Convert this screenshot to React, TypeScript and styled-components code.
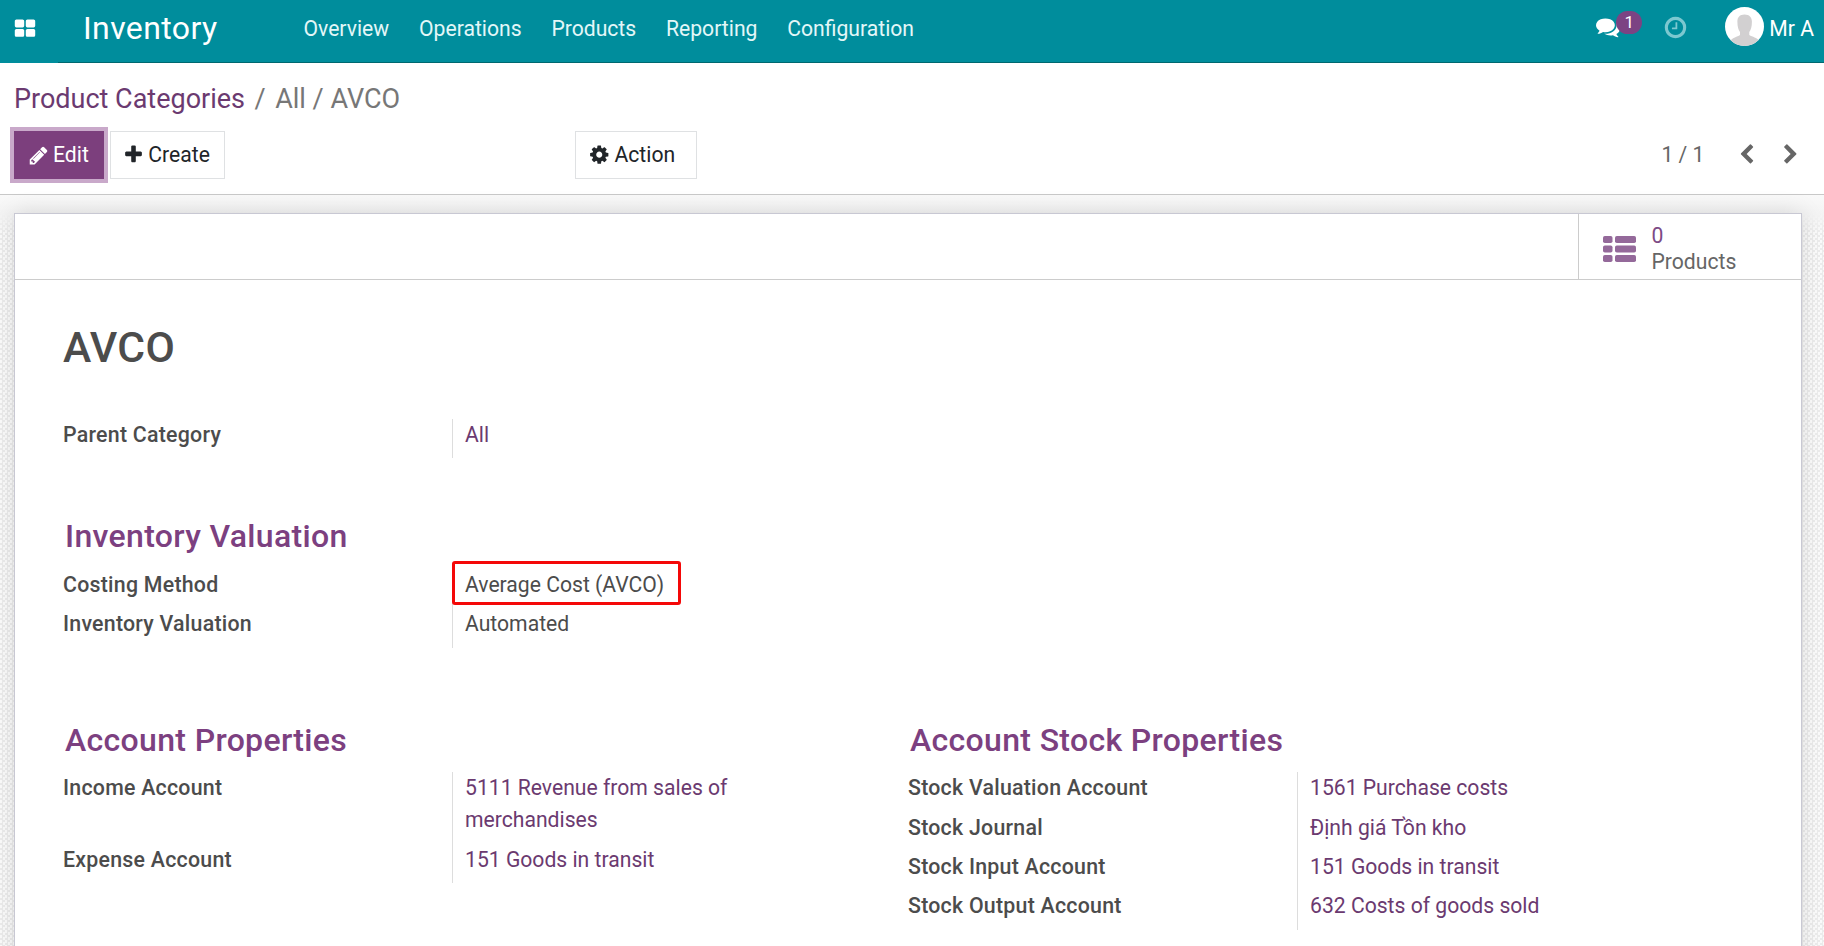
import React from "react";
import styled, { createGlobalStyle } from "styled-components";

const Global = createGlobalStyle`
  *, *::before, *::after { box-sizing: border-box; }
  html, body { margin: 0; padding: 0; height: 100%; overflow: hidden; }
  body {
    font-family: Roboto, "Noto Sans", sans-serif;
    font-size: 21.15px;
    line-height: 32px;
    color: #4c4c4c;
    background: #fff;
  }
`;

const Page = styled.div`
  height: 946px;
  display: flex;
  flex-direction: column;
  overflow: hidden;
`;

const Navbar = styled.header`
  height: 63px;
  flex: none;
  display: flex;
  align-items: center;
  padding: 0 10px 5px 14px;
  background: linear-gradient(#00686f, #00686f) 58px 62px no-repeat #008d9c;
  color: #fff;
`;

const Brand = styled.div`
  width: 220.5px;
  margin-left: 47px;
  font-size: 32px;
  line-height: 56px;
  padding-bottom: 2px;
  letter-spacing: 0.4px;
`;

const Menu = styled.nav`
  display: flex;
  gap: 29.8px;
  flex: 1;
`;

const MenuItem = styled.a`
  color: #e3f7f8;
  white-space: nowrap;
`;

const Systray = styled.div`
  display: flex;
  align-items: center;
`;

const Messages = styled.div`
  position: relative;
  width: 46px;
  height: 28px;
  margin-right: 21px;
`;

const Badge = styled.span`
  position: absolute;
  left: 20px;
  top: -4px;
  width: 26px;
  height: 23px;
  border-radius: 12px;
  background: #7c4383;
  font-size: 17px;
  line-height: 23px;
  text-align: center;
`;

const Clock = styled.span`
  display: flex;
  margin-bottom: 3px;
`;

const Avatar = styled.svg`
  margin: 0 5px 5px 37px;
`;

const ControlPanel = styled.section`
  height: 132px;
  flex: none;
  padding: 16px 24px 0 14px;
  border-bottom: 1px solid #c8c8c8;
`;

const Breadcrumb = styled.div`
  display: flex;
  gap: 9.5px;
  height: 40px;
  font-size: 27px;
  line-height: 40px;
  color: #777;
`;

const Crumb = styled.a`
  color: #6b3a70;
`;

const Toolbar = styled.div`
  display: flex;
  align-items: center;
  margin-top: 12px;
  height: 48px;
`;

const Button = styled.button<{ $primary?: boolean; $wide?: boolean }>`
  display: flex;
  align-items: center;
  gap: ${(p) => (p.$primary ? 5 : 6)}px;
  height: 48px;
  padding: 0 ${(p) => (p.$wide ? 21 : 14)}px 0 14px;
  font: inherit;
  border: 1px solid ${(p) => (p.$primary ? "#7c3f7d" : "#dfe1e3")};
  background: ${(p) => (p.$primary ? "#7c3f7d" : "#fff")};
  color: ${(p) => (p.$primary ? "#fff" : "#212529")};
  box-shadow: ${(p) => (p.$primary ? "0 0 0 4px #c9a9ca" : "none")};
`;

const MainButtons = styled.div`
  display: flex;
  gap: 6.5px;
  width: 561px;
`;

const Pager = styled.div`
  display: flex;
  align-items: center;
  margin-left: auto;
  color: #666;
`;

const PagerText = styled.span`
  margin-right: 32px;
`;

const PagerIcons = styled.span`
  display: flex;
  gap: 22px;
  margin-right: -1px;
`;

const Content = styled.main`
  flex: 1;
  min-height: 0;
  padding: 18px 22px 0 14px;
  background:
    linear-gradient(#f9f9f9, #f4f4f4 18px, rgba(244, 244, 244, 0) 40px),
    repeating-conic-gradient(#ececec 0 25%, #fbfbfb 0 50%) 0 0 / 5px 5px;
`;

const Sheet = styled.article`
  height: 780px;
  border: 1px solid #c8c8d3;
  background: #fff;
  box-shadow: 0 0 22px rgba(0, 0, 0, 0.13);
`;

const StatBar = styled.div`
  display: flex;
  justify-content: flex-end;
  height: 66px;
  border-bottom: 1px solid #ccc;
`;

const StatButton = styled.div`
  display: flex;
  align-items: center;
  width: 223px;
  padding: 5px 0 0 24px;
  gap: 15.5px;
  border-left: 1px solid #ccc;
  color: #666;
  line-height: 26px;
`;

const StatValue = styled.div`
  color: #7c4a85;
`;

const Body = styled.div`
  padding: 0 48px;
`;

const Title = styled.h1`
  margin: 35px 0 0;
  height: 65px;
  font-size: 42.6px;
  line-height: 64px;
  font-weight: 500;
  letter-spacing: 0.3px;
`;

const Columns = styled.div<{ $top: number }>`
  display: grid;
  grid-template-columns: 845px 1fr;
  margin-top: ${(p) => p.$top}px;
`;

const Heading = styled.h2`
  margin: 0 0 12.7px 2px;
  height: 40px;
  font-size: 32px;
  line-height: 40px;
  font-weight: 500;
  letter-spacing: 0.33px;
  color: #7c4080;
`;

const Field = styled.div`
  display: grid;
  grid-template-columns: 389px 280px;
`;

const Label = styled.div`
  font-size: 21.33px;
  font-weight: 500;
  letter-spacing: 0.25px;
`;

const Value = styled.div<{ $link?: boolean }>`
  position: relative;
  min-height: 39.33px;
  padding: 0 0 7.33px 12px;
  border-left: 1px solid #ddd;
  color: ${(p) => (p.$link ? "#6b3a70" : "#4c4c4c")};
`;

const Highlight = styled.span`
  position: absolute;
  left: -1px;
  top: -8px;
  width: 229px;
  height: 44px;
  border: 3px solid #f40808;
  border-radius: 3px;
`;

const paths = {
  apps: "M832 1024v384q0 52-38 90t-90 38h-512q-52 0-90-38t-38-90v-384q0-52 38-90t90-38h512q52 0 90 38t38 90zm0-768v384q0 52-38 90t-90 38h-512q-52 0-90-38t-38-90v-384q0-52 38-90t90-38h512q52 0 90 38t38 90zm896 768v384q0 52-38 90t-90 38h-512q-52 0-90-38t-38-90v-384q0-52 38-90t90-38h512q52 0 90 38t38 90zm0-768v384q0 52-38 90t-90 38h-512q-52 0-90-38t-38-90v-384q0-52 38-90t90-38h512q52 0 90 38t38 90z",
  plus: "M1600 736v192q0 40-28 68t-68 28h-416v416q0 40-28 68t-68 28h-192q-40 0-68-28t-28-68v-416h-416q-40 0-68-28t-28-68v-192q0-40 28-68t68-28h416v-416q0-40 28-68t68-28h192q40 0 68 28t28 68v416h416q40 0 68 28t28 68z",
  pencil: "M491 1536l91-91-235-235-91 91v107h128v128h107zm523-928q0-22-22-22-10 0-17 7l-542 542q-7 7-7 17 0 22 22 22 10 0 17-7l542-542q7-7 7-17zm-54-192l416 416-832 832h-416v-416zm683 96q0 53-37 90l-166 166-416-416 166-165q36-38 90-38 53 0 91 38l235 234q37 39 37 91z",
  cog: "M1152 896q0-106-75-181t-181-75-181 75-75 181 75 181 181 75 181-75 75-181zm512-109v222q0 12-8 23t-20 13l-185 28q-19 54-39 91 35 50 107 138 10 12 10 25t-9 23q-27 37-99 108t-94 71q-12 0-26-9l-138-108q-44 23-91 38-16 136-29 186-7 28-36 28h-222q-14 0-24.5-8.5t-11.5-21.5l-28-184q-49-16-90-37l-141 107q-10 9-25 9-14 0-25-11-126-114-165-168-7-10-7-23 0-12 8-23 15-21 51-66.5t54-70.5q-27-50-41-99l-183-27q-13-2-21-12.5t-8-23.5v-222q0-12 8-23t19-13l186-28q14-46 39-92-40-57-107-138-10-12-10-24 0-10 9-23 26-36 98.5-107.5t94.5-71.5q13 0 26 10l138 107q44-23 91-38 16-136 29-186 7-28 36-28h222q14 0 24.5 8.5t11.5 21.5l28 184q49 16 90 37l142-107q9-9 24-9 13 0 25 10 129 119 165 170 7 8 7 22 0 12-8 23-15 21-51 66.5t-54 70.5q26 50 41 98l183 28q13 2 21 12.5t8 23.5z",
  clock: "M1024 544v448q0 14-9 23t-23 9h-320q-14 0-23-9t-9-23v-64q0-14 9-23t23-9h224v-352q0-14 9-23t23-9h64q14 0 23 9t9 23zm416 352q0-148-73-273t-198-198-273-73-273 73-198 198-73 273 73 273 198 198 273 73 273-73 198-198 73-273zm224 0q0 209-103 385.5t-279.5 279.5-385.5 103-385.5-103-279.5-279.5-103-385.5 103-385.5 279.5-279.5 385.5-103 385.5 103 279.5 279.5 103 385.5z",
  comments: "M1408 768q0 139-94 257t-256.5 186.5-353.5 68.5q-86 0-176-16-124 88-278 128-36 9-86 16h-3q-11 0-20.5-8t-11.5-21q-1-3-1-6.5t.5-6.5 2-6l2.5-5 3.5-5.5 4-5 4.5-5 4-4.5q5-6 23-25t26-29.5 22.5-29 25-38.5 20.5-44q-124-72-195-177t-71-224q0-139 94-257t256.5-186.5 353.5-68.5 353.5 68.5 256.5 186.5 94 257zm384 256q0 120-71 224.5t-195 176.5q10 24 20.5 44t25 38.5 22.5 29 26 29.5 23 25q1 1 4 4.5t4.5 5 4 5 3.5 5.5l2.5 5 2 6 .5 6.5-1 6.5q-3 14-13 22t-22 7q-50-7-86-16-154-40-278-128-90 16-176 16-271 0-472-132 58 4 88 4 161 0 309-45t264-129q125-92 192-212t67-254q0-77-23-152 129 71 204 178t75 230z",
  left: "M1427 301l-531 531 531 531q19 19 19 45t-19 45l-166 166q-19 19-45 19t-45-19l-742-742q-19-19-19-45t19-45l742-742q19-19 45-19t45 19l166 166q19 19 19 45t-19 45z",
  right: "M365 301l531 531-531 531q-19 19-19 45t19 45l166 166q19 19 45 19t45-19l742-742q19-19 19-45t-19-45l-742-742q-19-19-45-19t-45 19l-166 166q-19 19-19 45t19 45z",
};

type IconProps = { name: keyof typeof paths; size?: number; crop?: string; width?: number; color?: string };

const Icon = ({ name, size = 21.33, width, crop = "0 0 1792 1792", color = "currentColor" }: IconProps) => (
  <svg width={width ?? size} height={size} viewBox={crop} fill={color} aria-hidden="true">
    <path d={paths[name]} />
  </svg>
);

const ListIcon = () => (
  <svg width="33" height="26" viewBox="0 0 33 26" fill="#94699a" aria-hidden="true">
    {[0, 9.5, 19].map((y) => (
      <React.Fragment key={y}>
        <rect x="0" y={y} width="9.5" height="7" rx="1.8" />
        <rect x="12" y={y} width="21" height="7" rx="1.8" />
      </React.Fragment>
    ))}
  </svg>
);

const menu = ["Overview", "Operations", "Products", "Reporting", "Configuration"];

const stockFields = [
  ["Stock Valuation Account", "1561 Purchase costs"],
  ["Stock Journal", "Định giá Tồn kho"],
  ["Stock Input Account", "151 Goods in transit"],
  ["Stock Output Account", "632 Costs of goods sold"],
];

const accountFields = [
  ["Income Account", "5111 Revenue from sales of merchandises"],
  ["Expense Account", "151 Goods in transit"],
];

const LinkFields = ({ items }: { items: string[][] }) => (
  <>
    {items.map(([label, value]) => (
      <Field key={label}>
        <Label>{label}</Label>
        <Value $link>{value}</Value>
      </Field>
    ))}
  </>
);

export default function App() {
  return (
    <>
      <Global />
      <Page>
        <Navbar>
          <Icon name="apps" size={22} />
          <Brand>Inventory</Brand>
          <Menu>
            {menu.map((m) => (
              <MenuItem key={m}>{m}</MenuItem>
            ))}
          </Menu>
          <Systray>
            <Messages>
              <Icon name="comments" size={24} />
              <Badge>1</Badge>
            </Messages>
            <Clock>
              <Icon name="clock" size={25} color="#7cc8d0" />
            </Clock>
            <Avatar width="39" height="39" viewBox="0 0 39 39">
              <defs>
                <clipPath id="avatar">
                  <circle cx="19.5" cy="19.5" r="19.5" />
                </clipPath>
              </defs>
              <g clipPath="url(#avatar)">
                <rect width="39" height="39" fill="#fff" />
                <path fill="#d2d0d1" d="M19.5 7.5c5 0 7.600 3 7.400 7.500c0 4.500-1 8-2.600 10v3c3 2 8 2.500 9.500 5.500v6h-28v-6c1.500-3 6.500-3.500 9.200-5.500v-3c-1.600-2-2.600-5.500-2.600-10c-.2-4.500 2.100-7.500 7.100-7.500z" />
              </g>
            </Avatar>
            <span>Mr A</span>
          </Systray>
        </Navbar>

        <ControlPanel>
          <Breadcrumb>
            <Crumb>Product Categories</Crumb>
            <span>/</span>
            <span>All / AVCO</span>
          </Breadcrumb>
          <Toolbar>
            <MainButtons>
              <Button $primary>
                <Icon name="pencil" size={21} width={19} crop="64 0 1640 1792" />
                Edit
              </Button>
              <Button>
                <Icon name="plus" size={21.3} width={17} crop="180 0 1430 1792" />
                Create
              </Button>
            </MainButtons>
            <Button $wide>
              <Icon name="cog" size={21.3} width={18.5} crop="120 0 1552 1792" />
              Action
            </Button>
            <Pager>
              <PagerText>1 / 1</PagerText>
              <PagerIcons>
                <Icon name="left" size={21.3} />
                <Icon name="right" size={21.3} />
              </PagerIcons>
            </Pager>
          </Toolbar>
        </ControlPanel>

        <Content>
          <Sheet>
            <StatBar>
              <StatButton>
                <ListIcon />
                <div>
                  <StatValue>0</StatValue>
                  <div>Products</div>
                </div>
              </StatButton>
            </StatBar>
            <Body>
              <Title>AVCO</Title>
              <Columns $top={39}>
                <Field>
                  <Label>Parent Category</Label>
                  <Value $link>All</Value>
                </Field>
              </Columns>
              <Columns $top={58}>
                <div>
                  <Heading>Inventory Valuation</Heading>
                  <Field>
                    <Label>Costing Method</Label>
                    <Value>
                      Average Cost (AVCO)
                      <Highlight />
                    </Value>
                  </Field>
                  <Field>
                    <Label>Inventory Valuation</Label>
                    <Value>Automated</Value>
                  </Field>
                </div>
              </Columns>
              <Columns $top={72}>
                <div>
                  <Heading>Account Properties</Heading>
                  <LinkFields items={accountFields} />
                </div>
                <div>
                  <Heading>Account Stock Properties</Heading>
                  <LinkFields items={stockFields} />
                </div>
              </Columns>
            </Body>
          </Sheet>
        </Content>
      </Page>
    </>
  );
}
